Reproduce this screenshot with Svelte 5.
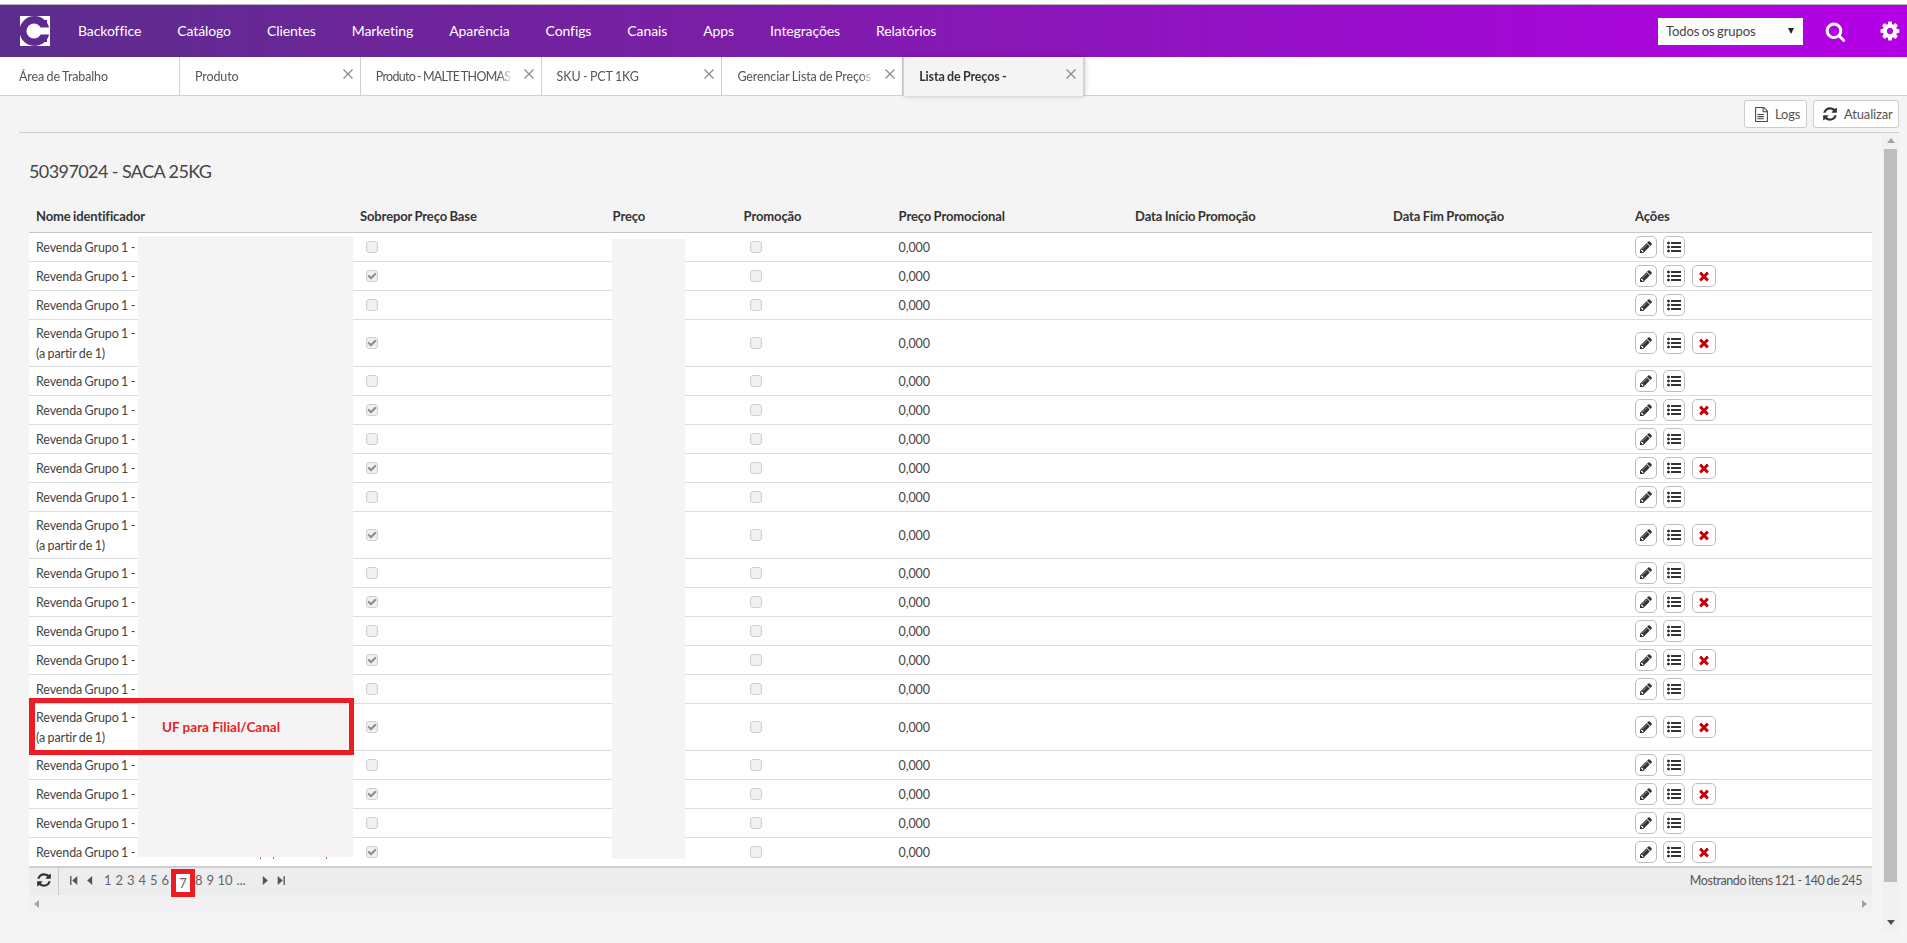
<script>
  const P = {
    pencil: 'M491 1536l91-91-235-235-91 91v107h128v128h107zm523-928q0-22-22-22-10 0-17 7l-542 542q-7 7-7 17 0 22 22 22 10 0 17-7l542-542q7-7 7-17zm-54-192l416 416-832 832h-416v-416zm683 96q0 53-37 90l-166 166-416-416 166-165q36-38 90-38 53 0 91 38l235 234q37 39 37 91z',
    list: 'M384 1408q0 80-56 136t-136 56-136-56-56-136 56-136 136-56 136 56 56 136zm0-512q0 80-56 136t-136 56-136-56-56-136 56-136 136-56 136 56 56 136zm1408 416v192q0 13-9.5 22.5t-22.5 9.5h-1216q-13 0-22.5-9.5t-9.5-22.5v-192q0-13 9.5-22.5t22.5-9.5h1216q13 0 22.5 9.5t9.5 22.5zm-1408-928q0 80-56 136t-136 56-136-56-56-136 56-136 136-56 136 56 56 136zm1408 416v192q0 13-9.5 22.5t-22.5 9.5h-1216q-13 0-22.5-9.5t-9.5-22.5v-192q0-13 9.5-22.5t22.5-9.5h1216q13 0 22.5 9.5t9.5 22.5zm0-512v192q0 13-9.5 22.5t-22.5 9.5h-1216q-13 0-22.5-9.5t-9.5-22.5v-192q0-13 9.5-22.5t22.5-9.5h1216q13 0 22.5 9.5t9.5 22.5z',
    times: 'M1490 1322q0 40-28 68l-136 136q-28 28-68 28t-68-28l-294-294-294 294q-28 28-68 28t-68-28l-136-136q-28-28-28-68t28-68l294-294-294-294q-28-28-28-68t28-68l136-136q28-28 68-28t68 28l294 294 294-294q28-28 68-28t68 28l136 136q28 28 28 68t-28 68l-294 294 294 294q28 28 28 68z',
    check: 'M1671 566q0 40-28 68l-724 724-136 136q-28 28-68 28t-68-28l-136-136-362-362q-28-28-28-68t28-68l136-136q28-28 68-28t68 28l294 295 656-657q28-28 68-28t68 28l136 136q28 28 28 68z',
    refresh: 'M1639 1056q0 5-1 7-64 268-268 434.5t-478 166.5q-146 0-282.5-55t-243.5-157l-129 129q-19 19-45 19t-45-19-19-45v-448q0-26 19-45t45-19h448q26 0 45 19t19 45-19 45l-137 137q71 66 161 102t187 36q134 0 250-65t186-179q11-17 53-117 8-23 30-23h192q13 0 22.5 9.5t9.5 22.5zm25-800v448q0 26-19 45t-45 19h-448q-26 0-45-19t-19-45 19-45l138-138q-148-137-349-137-134 0-250 65t-186 179q-11 17-53 117-8 23-30 23h-199q-13 0-22.5-9.5t-9.5-22.5v-7q65-268 270-434.5t480-166.5q146 0 284 55.5t245 156.5l130-129q19-19 45-19t45 19 19 45z',
    file: 'M1596 380q28 28 48 76t20 88v1152q0 40-28 68t-68 28h-1344q-40 0-68-28t-28-68v-1600q0-40 28-68t68-28h896q40 0 88 20t76 48zm-444-244v376h376q-10-29-22-41l-313-313q-12-12-41-22zm384 1528v-1024h-416q-40 0-68-28t-28-68v-416h-768v1536h1280zm-1128-800q0-14 9-23t23-9h704q14 0 23 9t9 23v64q0 14-9 23t-23 9h-704q-14 0-23-9t-9-23v-64zm736 224q14 0 23 9t9 23v64q0 14-9 23t-23 9h-704q-14 0-23-9t-9-23v-64q0-14 9-23t23-9h704zm0 256q14 0 23 9t9 23v64q0 14-9 23t-23 9h-704q-14 0-23-9t-9-23v-64q0-14 9-23t23-9h704z',
    search: 'M1216 832q0-185-131.500-316.500t-316.500-131.500-316.500 131.500-131.500 316.500 131.500 316.500 316.500 131.500 316.500-131.500 131.500-316.500zm512 832q0 52-38 90t-90 38q-54 0-90-38l-343-342q-179 124-399 124-143 0-273.500-55.500t-225-150-150-225-55.500-273.500 55.500-273.500 150-225 225-150 273.500-55.500 273.500 55.500 225 150 150 225 55.500 273.500q0 220-124 399l343 343q37 37 37 90z',
    cog: 'M1152 896q0-106-75-181t-181-75-181 75-75 181 75 181 181 75 181-75 75-181zm512-109v222q0 12-8 23t-20 13l-185 28q-19 54-39 91 35 50 107 138 10 12 10 25t-9 23q-27 37-99 108t-94 71q-12 0-26-9l-138-108q-44 23-91 38-16 136-29 186-7 28-36 28h-222q-14 0-24.500-8.500t-11.500-21.500l-28-184q-49-16-90-37l-141 107q-10 9-25 9-14 0-25-11-126-114-165-168-7-10-7-23 0-12 8-23 15-21 51-66.500t54-70.500q-27-50-41-99l-183-27q-13-2-21-12.500t-8-23.500v-222q0-12 8-23t19-13l186-28q14-46 39-92-40-57-107-138-10-12-10-24 0-10 9-23 26-36 98.500-107.500t94.500-71.500q13 0 26 10l138 107q44-23 91-38 16-136 29-186 7-28 36-28h222q14 0 24.500 8.500t11.500 21.500l28 184q49 16 90 37l142-107q9-9 24-9 13 0 25 10 129 119 165 170 7 8 7 22 0 12-8 23-15 21-51 66.500t-54 70.500q26 50 41 98l183 28q13 2 21 12.500t8 23.500z'
  };
  const nav = ['Backoffice','Catálogo','Clientes','Marketing','Aparência','Configs','Canais','Apps','Integrações','Relatórios'];
  const tabs = [
    { t: 'Área de Trabalho', close: false },
    { t: 'Produto', close: true },
    { t: 'Produto - MALTE THOMAS', close: true, tight: true },
    { t: 'SKU - PCT 1KG', close: true },
    { t: 'Gerenciar Lista de Preços', close: true },
    { t: 'Lista de Preços -', close: true, active: true }
  ];
  const cols = ['Nome identificador','Sobrepor Preço Base','Preço','Promoção','Preço Promocional','Data Início Promoção','Data Fim Promoção','Ações'];
  const rows = Array.from({ length: 20 }, (_, i) => ({ checked: i % 2 === 1, two: i === 3 || i === 9 || i === 15 }));
</script>

{#snippet icon(name, cls)}
  <svg class={cls} viewBox="0 0 1792 1792" aria-hidden="true"><path d={P[name]} /></svg>
{/snippet}

{#snippet closeX()}
  <svg class="x" viewBox="0 0 10 10" aria-hidden="true"><path d="M.5.5l9 9M9.500.5l-9 9" /></svg>
{/snippet}

{#snippet arrow(kind)}
  <svg class="pg-ic" viewBox="0 0 10 10" aria-hidden="true">
    {#if kind === 'first'}<path d="M1.500 1h1.200v8H1.500zM8 1v8L3.400 5z" />
    {:else if kind === 'prev'}<path d="M7 1v8L2.400 5z" />
    {:else if kind === 'next'}<path d="M3 1v8l4.600-4z" />
    {:else}<path d="M7.300 1h1.200v8H7.300zM2 1v8l4.600-4z" />{/if}
  </svg>
{/snippet}

<div class="page">
  <div class="strip"></div>
  <header class="nav">
    <div class="logo">
      <svg viewBox="0 0 30 30" aria-hidden="true">
        <path fill="#fff" d="M0 0h30v30H0z" />
        <circle cx="14.500" cy="15" r="15" fill="#5f2a90" />
        <path fill="#5f2a90" d="M22 4h5v6h-5zM22 20h5v6h-5z" />
        <circle cx="14" cy="15" r="7.500" fill="#fff" />
        <path fill="#fff" d="M14 11.500h16v7H14z" />
      </svg>
    </div>
    <nav class="menu">
      {#each nav as n}<span class="menu-item">{n}</span>{/each}
    </nav>
    <div class="nav-right">
      <div class="group-select"><span>Todos os grupos</span><i class="caret"></i></div>
      {@render icon('search', 'nav-search')}
      {@render icon('cog', 'nav-cog')}
    </div>
  </header>

  <div class="tabs">
    {#each tabs as tab}
      <div class="tab" class:active={tab.active}>
        <span class="tab-text" class:tight={tab.tight}>{tab.t}</span>
        {#if tab.close}{@render closeX()}{/if}
      </div>
    {/each}
  </div>

  <div class="toolbar">
    <button class="tool logs">{@render icon('file', 'tool-ic')}Logs</button>
    <button class="tool upd">{@render icon('refresh', 'tool-ic dark')}Atualizar</button>
  </div>

  <div class="main">
    <div class="content">
      <h1>50397024 - SACA 25KG</h1>
      <div class="table-wrap">
        <table>
          <colgroup>
            <col class="c1" /><col class="c2" /><col class="c3" /><col class="c4" /><col class="c5" /><col class="c6" /><col class="c7" /><col class="c8" />
          </colgroup>
          <thead>
            <tr>{#each cols as c}<th>{c}</th>{/each}</tr>
          </thead>
          <tbody>
            {#each rows as r}
              <tr>
                <td class="txt">Revenda Grupo 1 -{#if r.two}<br />(a partir de 1){/if}</td>
                <td><span class="cb">{#if r.checked}{@render icon('check', 'cb-ic')}{/if}</span></td>
                <td></td>
                <td><span class="cb"></span></td>
                <td class="txt">0,000</td>
                <td></td>
                <td></td>
                <td>
                  <div class="acts">
                    <span class="act">{@render icon('pencil', 'act-ic')}</span>
                    <span class="act">{@render icon('list', 'act-ic')}</span>
                    {#if r.checked}<span class="act del">{@render icon('times', 'act-ic red')}</span>{/if}
                  </div>
                </td>
              </tr>
            {/each}
          </tbody>
        </table>

        <div class="pager">
          <span class="pg-refresh">{@render icon('refresh', 'pg-ref-ic')}</span>
          <span class="pg-btns">{@render arrow('first')}{@render arrow('prev')}</span>
          <span class="nums">
            {#each [1,2,3,4,5,6] as n}<span class="num">{n}</span>{/each}
            <span class="num current">7</span>
            <span class="num">8</span><span class="num">9</span><span class="num ten">10</span><span class="num dots">...</span>
          </span>
          <span class="pg-btns next">{@render arrow('next')}{@render arrow('last')}</span>
          <span class="pg-info">Mostrando itens 121 - 140 de 245</span>
        </div>
        <div class="hscroll"><i class="tri left"></i><i class="tri right"></i></div>

        <div class="redact name"></div>
        <div class="redact price"></div>
        <div class="marks"></div>
        <div class="callout"><span>UF para Filial/Canal</span></div>
      </div>
    </div>
    <div class="vscroll">
      <i class="tri up"></i>
      <div class="thumb"></div>
      <i class="tri down"></i>
    </div>
  </div>
</div>

<style>
  :global(body) { margin: 0; background: #f4f4f4; }
  .page {
    height: 943px; overflow: hidden; background: #f4f4f4;
    font-family: Lato, "Noto Sans", sans-serif; font-size: 12.500px; letter-spacing: -.12px; word-spacing: -.6px; color: #3a3a3a;
  }
  .strip { height: 4px; background: #fff; border-bottom: 1px solid #b5b5b5; }
  .nav {
    height: 52px; display: flex; align-items: center; color: #fff;
    background: linear-gradient(90deg, #5c2d8c 0%, #7a1ea6 38%, #9710c8 68%, #b400e6 100%);
  }
  .logo { width: 30px; height: 30px; margin-left: 20px; margin-right: 10px; }
  .logo svg { display: block; width: 30px; height: 30px; }
  .menu { display: flex; margin-top: -2px; }
  .menu-item { padding: 0 18px; font-size: 14px; letter-spacing: -.1px; }
  .nav-right { margin-left: auto; display: flex; align-items: center; }
  .group-select {
    width: 145px; height: 27px; box-sizing: border-box; background: #fff; color: #444;
    display: flex; align-items: center; justify-content: space-between; padding: 0 8px; font-size: 13px;
  }
  .caret { width: 0; height: 0; border: 3.500px solid transparent; border-top: 6px solid #222; border-bottom: 0; margin-right: 1px; }
  .nav-search { width: 21px; height: 21px; fill: #fff; margin-left: 22px; }
  .nav-cog { width: 22px; height: 22px; fill: #fff; margin-left: 33px; margin-right: 6px; }

  .tabs { height: 38px; display: flex; background: #fff; border-bottom: 1px solid #d0d0d0; }
  .tab {
    width: 180.800px; box-sizing: border-box; border-right: 1px solid #d0d0d0; position: relative;
    display: flex; align-items: center; padding-left: 15px; color: #555;
  }
  .tab:first-child { padding-left: 19px; width: 180px; }
  .tab-text { display: block; width: 137px; white-space: nowrap; overflow: hidden;
    mask-image: linear-gradient(90deg, #000 90%, transparent 100%); }
  .tab-text.tight { letter-spacing: -.7px; }
  .tab.active {
    background: #f4f4f4; font-weight: 700; color: #333; height: 39px;
    border-left: 1px solid #d0d0d0; box-shadow: 1px 0 4px rgba(0,0,0,.25); z-index: 1;
  }
  .x { position: absolute; right: 7px; top: 12px; width: 10px; height: 10px; fill: none; stroke: #8a8a8a; stroke-width: 1.200; }

  .toolbar {
    height: 37px; box-sizing: border-box; margin: 0 8px 0 19px; padding-top: 4px;
    border-bottom: 1px solid #cfcfcf; display: flex; justify-content: flex-end; gap: 6px;
  }
  .tool {
    height: 28px; box-sizing: border-box; border: 1px solid #ccc; border-radius: 3px; background: #fff; padding: 0 0 0 9px;
    display: flex; align-items: center; gap: 6px; font: inherit; font-size: 13px; letter-spacing: -.15px; color: #555;
  }
  .tool.logs { width: 63px; }
  .tool.upd { width: 86px; padding-left: 8px; }
  .tool-ic { width: 15px; height: 15px; fill: #444; flex: none; }
  .tool-ic.dark { fill: #333; width: 16px; height: 16px; }

  .main { display: flex; padding-left: 29px; height: 809px; }
  .content { width: 1843px; }
  h1 { margin: 22px 0 12px; font-size: 18px; line-height: 30px; font-weight: 400; color: #444; letter-spacing: -.59px; word-spacing: 0; position: relative; top: 1px; }
  .table-wrap { position: relative; }
  table { width: 100%; table-layout: fixed; border-collapse: separate; border-spacing: 0; }
  .c1 { width: 324px; } .c2 { width: 252.600px; } .c3 { width: 131px; } .c4 { width: 155px; }
  .c5 { width: 236.500px; } .c6 { width: 258px; } .c7 { width: 242px; }
  th {
    height: 36px; box-sizing: border-box; padding: 2px 7px 0; text-align: left; font-weight: 700; color: #333;
    border-bottom: 1px solid #c8c8c8; white-space: nowrap; font-size: 13px;
  }
  td { background: #fff; padding: 3px 7px; line-height: 20px; border-bottom: 1px solid #ddd; vertical-align: middle; color: #444; }
  td.txt { padding-top: 4px; padding-bottom: 2px; }
  tbody tr:last-child td { border-bottom: 0; }
  .cb {
    display: block; width: 12px; height: 12px; margin-left: 6px; border: 1px solid #cfcfcf; border-radius: 3px; background: #f0f0f0;
    box-sizing: border-box; position: relative;
  }
  .cb-ic { position: absolute; left: 0; top: 0; width: 10px; height: 10px; fill: #8d8d8d; }
  .acts { display: flex; gap: 6px; }
  .act {
    width: 22px; height: 22px; box-sizing: border-box; border: 1px solid #b9bec4; border-radius: 5px; background: #fff;
    display: flex; align-items: center; justify-content: center;
  }
  .act.del { width: 24px; margin-left: 1px; }
  .act-ic { width: 14px; height: 14px; fill: #333; }
  .act-ic.red { fill: #c4000e; }

  .pager {
    height: 29px; box-sizing: border-box; background: #ededed; border-top: 2px solid #cfcfcf;
    display: flex; align-items: center; color: #666;
  }
  .pg-refresh { width: 30px; height: 27px; box-sizing: border-box; border-right: 1px solid #c9c9c9; display: flex; align-items: center; justify-content: center; }
  .pg-ref-ic { width: 16px; height: 16px; fill: #333; margin-top: -3px; }
  .pg-btns { display: flex; margin-left: 7px; margin-top: -2px; }
  .pg-btns.next { margin-left: 9px; }
  .pg-ic { width: 16px; height: 11px; fill: #555; }
  .nums { display: flex; margin-left: 4px; font-size: 13px; letter-spacing: 0; }
  .num { width: 11.500px; text-align: center; position: relative; top: -1px; }
  .num.current { width: 14px; height: 18px; line-height: 18px; margin: 0 3px 0 5px; background: #fff; outline: 5px solid #ed1c24; top: 1px; }
  .num.ten { width: 18px; }
  .num.dots { width: 14px; }
  .pg-info { margin-left: auto; padding-right: 10px; color: #555; letter-spacing: -.42px; margin-top: -2px; }
  .hscroll { height: 17px; background: #f1f1f1; display: flex; justify-content: space-between; align-items: center; padding: 0 5px; }
  .tri { width: 0; height: 0; display: block; border: 4px solid transparent; }
  .tri.left { border-right: 5px solid #a3a3a3; border-left: 0; }
  .tri.right { border-left: 5px solid #a3a3a3; border-right: 0; }

  .redact { position: absolute; background: #f4f4f4; }
  .redact.name { left: 109px; top: 39px; width: 215px; height: 621px; }
  .redact.price { left: 583px; top: 42px; width: 73px; height: 620px; }
  .marks {
    position: absolute; left: 231px; top: 660px; width: 67px; height: 2px;
    background:
      linear-gradient(#d04a6a, #d04a6a) 0 0 / 1px 2px no-repeat,
      linear-gradient(#d04a6a, #d04a6a) 13px 0 / 1px 2px no-repeat,
      linear-gradient(#d04a6a, #d04a6a) 66px 0 / 1px 2px no-repeat;
  }
  .callout {
    position: absolute; left: 0; top: 501px; width: 325px; height: 57px; box-sizing: border-box;
    border: 5px solid #ed1c24; border-left-width: 6px; display: flex; align-items: center;
  }
  .callout span { margin-left: 127px; font-weight: 700; color: #ed1c24; font-size: 13.500px; letter-spacing: 0; word-spacing: 0; }

  .vscroll {
    width: 17px; height: 799px; margin-left: 10px; background: #f1f1f1; position: relative;
    display: flex; flex-direction: column; align-items: center;
  }
  .thumb { width: 13px; height: 733px; margin-top: 6px; background: #bdbdbd; }
  .tri.up { margin-top: 5px; border-bottom: 5px solid #a3a3a3; border-top: 0; }
  .tri.down { margin-top: auto; margin-bottom: 7px; border-top: 5px solid #505050; border-bottom: 0; }
</style>
